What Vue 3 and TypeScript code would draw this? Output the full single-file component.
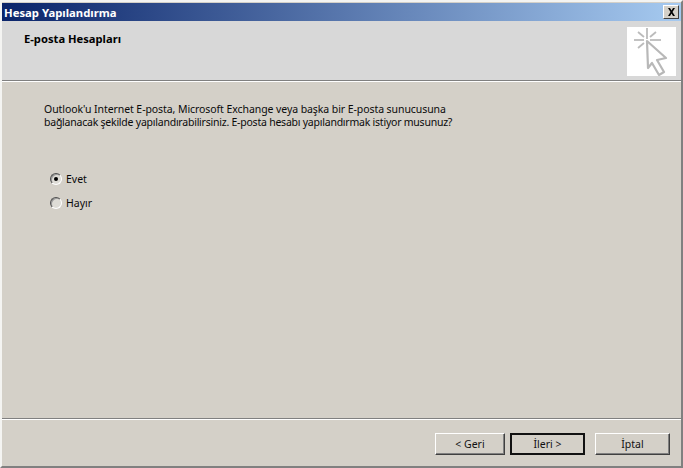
<script setup lang="ts">
const options = [
  { label: 'Evet', checked: true },
  { label: 'Hayır', checked: false },
]
const rays = [
  [20, 1, 20, 12], [11, 5, 17, 10], [29, 5, 23, 10], [7, 13, 17, 13], [23, 13, 34, 13], [11, 21, 17, 16],
]
</script>

<template>
  <div class="window">
    <div class="titlebar">
      <span class="title">Hesap Yapılandırma</span>
      <button class="close" aria-label="Kapat">
        <svg width="9" height="8" viewBox="0 0 9 8"><path d="M1 0h2l1.500 2.500L6 0h2L5.500 4 8 8H6L4.500 5.500 3 8H1l2.500-4z" fill="#000"/></svg>
      </button>
    </div>
    <header class="header">
      <h1>E-posta Hesapları</h1>
      <div class="logo">
        <svg width="49" height="49" viewBox="0 0 49 49">
          <line v-for="(r, i) in rays" :key="i" :x1="r[0]" :y1="r[1]" :x2="r[2]" :y2="r[3]" stroke="#bbb" stroke-width="1.800"/>
          <path d="M20 14 L39 31 L30 33 L37 45 L32 48 L25 36 L21 41 Z" fill="#fff" stroke="#b8b8b8" stroke-width="2.200" stroke-linejoin="round"/>
        </svg>
      </div>
    </header>
    <main class="body">
      <p class="intro">
        <span class="line first">Outlook'u Internet E-posta, Microsoft Exchange veya başka bir E-posta sunucusuna</span>
        <span class="line second">bağlanacak şekilde yapılandırabilirsiniz. E-posta hesabı yapılandırmak istiyor musunuz?</span>
      </p>
      <div class="options">
        <label v-for="o in options" :key="o.label" class="option">
          <span class="radio" :class="{ on: o.checked }"></span>
          <span>{{ o.label }}</span>
        </label>
      </div>
    </main>
    <footer class="footer">
      <div class="group">
        <button class="btn narrow">&lt; Geri</button>
        <button class="btn default">İleri &gt;</button>
      </div>
      <button class="btn">İptal</button>
    </footer>
  </div>
</template>

<style>
html, body { margin: 0; background: #d4d0c8; }
</style>

<style scoped>
.window {
  width: 683px;
  height: 468px;
  box-sizing: border-box;
  display: flex;
  flex-direction: column;
  background: #d4d0c8;
  border-top: 2px solid #f4f4f2;
  border-left: 2px solid #f4f4f2;
  border-right: 2px solid #808080;
  border-bottom: 2px solid #808080;
  padding-top: 1px;
  font-family: "Noto Sans", sans-serif;
  font-size: 10.500px;
  color: #0a0a0a;
  overflow: hidden;
}
.titlebar {
  height: 18px;
  flex: none;
  display: flex;
  align-items: center;
  justify-content: space-between;
  padding: 0 2px 0 2px;
  background: linear-gradient(90deg, #0a246a, #a6caf0);
}
.title { color: #fff; font-weight: bold; font-size: 11.300px; }
.close {
  width: 16px;
  height: 14px;
  padding: 0;
  display: flex;
  align-items: center;
  justify-content: center;
  background: #d4d0c8;
  border: 1px solid;
  border-color: #fff #404040 #404040 #fff;
}
.header {
  height: 59px;
  flex: none;
  box-sizing: border-box;
  display: flex;
  justify-content: space-between;
  background: #d8d8d8;
  padding: 0 5px 0 22px;
}
.header h1 { margin: 10px 0 0; font-size: 11.200px; font-weight: bold; line-height: 15px; color: #000; }
.logo { width: 49px; height: 49px; margin-top: 6px; background: #fff; }
.body {
  flex: 1;
  box-sizing: border-box;
  border-top: 1px solid #808080;
  border-bottom: 1px solid #808080;
  box-shadow: inset 0 1px 0 #fff;
  padding: 22px 0 0 42px;
}
.intro { margin: 0; line-height: 13px; }
.line { display: block; white-space: nowrap; }
.first { letter-spacing: -0.075px; }
.second { letter-spacing: -0.230px; }
.options {
  margin: 43px 0 0 6px;
  display: flex;
  flex-direction: column;
  gap: 11px;
}
.option { display: flex; align-items: center; gap: 4px; height: 13px; }
.radio {
  width: 12px;
  height: 12px;
  box-sizing: border-box;
  display: flex;
  align-items: center;
  justify-content: center;
  border-radius: 50%;
  border: 1px solid;
  border-color: #505050 #fff #fff #505050;
  box-shadow: inset 1px 1px 0 #9a9a9a;
  background: #dedcd6;
}
.radio.on::after {
  content: "";
  width: 4px;
  height: 4px;
  border-radius: 50%;
  background: #000;
}
.footer {
  height: 47px;
  flex: none;
  box-sizing: border-box;
  border-top: 1px solid #fff;
  display: flex;
  justify-content: flex-end;
  gap: 10px;
  padding: 13px 11px 0 0;
}
.group { display: flex; gap: 5px; }
.btn {
  width: 75px;
  height: 22px;
  padding: 0;
  background: #d4d0c8;
  border: 1px solid;
  border-color: #fff #404040 #404040 #fff;
  box-shadow: inset -1px -1px 0 #808080;
  font: inherit;
  color: #111;
}
.btn.narrow { width: 70px; }
.btn.default {
  border: 2px solid #111;
  box-shadow: none;
}
</style>
